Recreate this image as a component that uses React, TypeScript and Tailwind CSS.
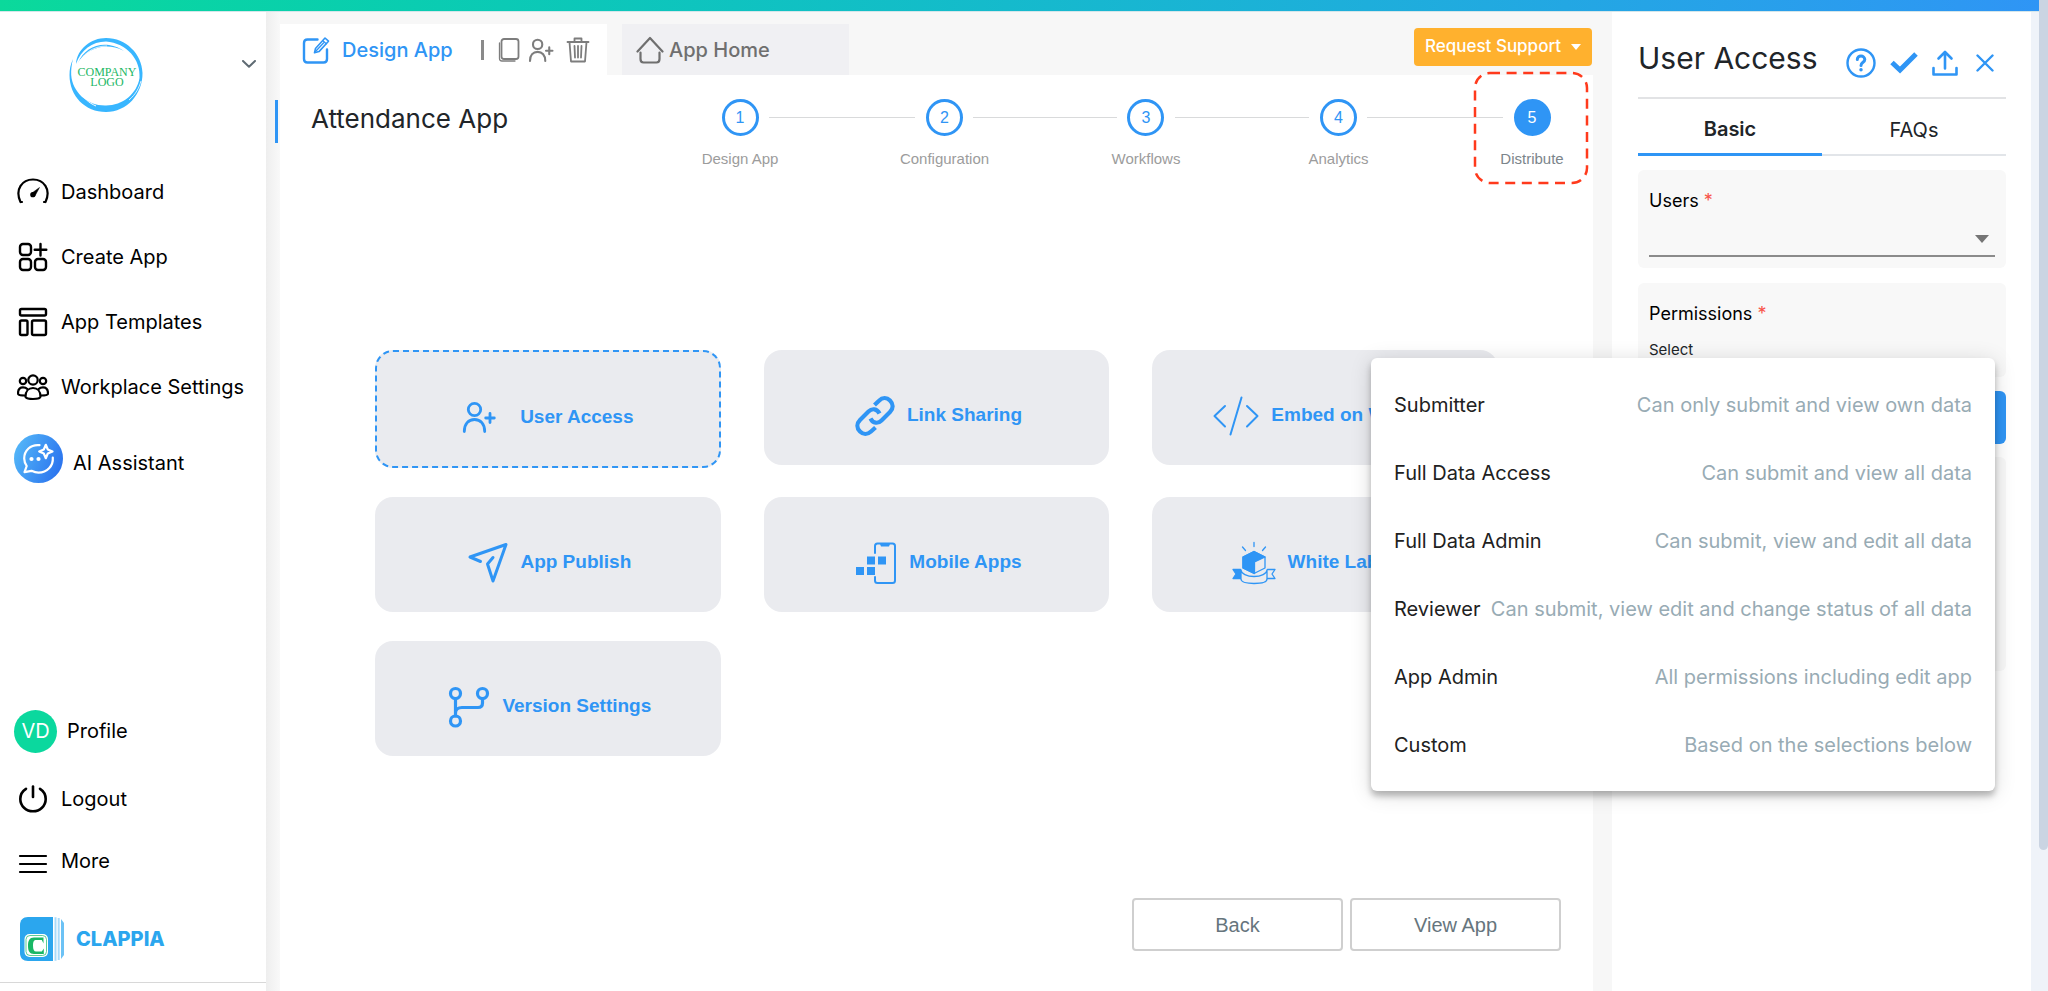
import React from 'react';

interface IconProps {
  className?: string;
}

const stroke = {
  fill: 'none',
  stroke: 'currentColor',
  strokeLinecap: 'round' as const,
  strokeLinejoin: 'round' as const,
};

const CompanyLogo = () => (
  <svg viewBox="0 0 74 74" className="h-[74px] w-[74px]" role="img" aria-label="Company logo">
    <path
      fillRule="evenodd"
      fill="#38b6ff"
      d="M37 0C57 0 73 16 73.500 35C73.700 56 58 74 37 74C16 74 .5 58 .5 37C.5 32 1.500 26 4 21C2.500 27 2 32 2.200 37C3.500 54 18 67.500 36 67.500C53 68 68 56 70.500 40C72 22 58 5 37 3.500C23 3.500 12 12 7 26C8 11 22 0 37 0Z"
    />
    <path d="M9 25C14 12 27 5 40 7C46 8 51 10 55 13C46 8 38 8 32 9C22 11 13 17 9 25Z" fill="#38b6ff" />
    <path d="M8 30C12 16 24 8 38 8" fill="none" stroke="#fff" strokeWidth="0.8" />
    <path d="M10 52C14 60 20 65 27 68" fill="none" stroke="#fff" strokeWidth="1" />
    <path d="M60 62C67 56 70 50 72 43" fill="none" stroke="#fff" strokeWidth="0.8" />
    <text x="38" y="38" textAnchor="middle" fontSize="12" fill="#22b765" fontFamily="'Liberation Serif', serif">COMPANY</text>
    <text x="38" y="48" textAnchor="middle" fontSize="12" fill="#22b765" fontFamily="'Liberation Serif', serif">LOGO</text>
  </svg>
);

const GaugeIcon = () => (
  <svg viewBox="0 0 32 32" className="h-8 w-8" {...stroke} strokeWidth="2.200">
    <path d="M3.500 26C-2.500 13 5.500 3.500 16 3.500S34.500 13 28.500 26M3.500 26H5M28.500 26H27" />
    <path d="M14.300 17.500L22.500 11.500L17.800 20.200Z" fill="currentColor" strokeWidth="0.5" />
    <circle cx="15.800" cy="18.700" r="2.600" fill="currentColor" stroke="none" />
  </svg>
);

const CreateIcon = () => (
  <svg viewBox="0 0 32 32" className="h-8 w-8" {...stroke} strokeWidth="2.400">
    <rect x="3" y="3" width="11" height="11" rx="3" />
    <rect x="3" y="18" width="11" height="11" rx="3" />
    <rect x="18" y="18" width="11" height="11" rx="3" />
    <path d="M23.500 3V14.500M17.700 8.700H29.300" />
  </svg>
);

const TemplateIcon = () => (
  <svg viewBox="0 0 32 32" className="h-8 w-8" {...stroke} strokeWidth="2.400">
    <rect x="3" y="3" width="26" height="6.500" rx="1.500" />
    <rect x="3" y="14.500" width="7.500" height="14.500" rx="1.500" />
    <rect x="15" y="14.500" width="14" height="14.500" rx="1.500" />
  </svg>
);

const PeopleIcon = () => (
  <svg viewBox="0 0 32 32" className="h-8 w-8" {...stroke} strokeWidth="2.200">
    <circle cx="16" cy="9" r="4.700" />
    <circle cx="6" cy="10" r="3.200" />
    <circle cx="26" cy="10" r="3.200" />
    <path d="M8.500 25.500C8.500 20.500 11.500 17 16 17S23.500 20.500 23.500 25.500C23.500 27.300 19.500 28 16 28S8.500 27.300 8.500 25.500Z" />
    <path d="M8 24.500C5 24.500 1 24 1 22.500C1 18.500 3 16.300 6 16.300C7.800 16.300 9.300 16.900 10.300 18M24 24.500C27 24.500 31 24 31 22.500C31 18.500 29 16.300 26 16.300C24.200 16.300 22.700 16.900 21.700 18" />
  </svg>
);

const AssistantIcon = () => (
  <svg viewBox="0 0 49 49" className="h-[49px] w-[49px]">
    <defs>
      <linearGradient id="assistant" x1="0" y1="0.300" x2="1" y2="0.700">
        <stop offset="0" stopColor="#53b6f8" />
        <stop offset="1" stopColor="#2a72ee" />
      </linearGradient>
    </defs>
    <circle cx="24.500" cy="24.500" r="24.500" fill="url(#assistant)" />
    <g {...stroke} stroke="#fff" strokeWidth="2.200">
      <path d="M25.500 11.200C16.500 10.300 10.200 16.500 10.200 24.500C10.200 27.500 11.400 30 12.700 32L10.500 38.200L17.500 36.800C20 38 22 38.600 24.500 38.600C33 38.600 39.500 32 38.800 23.500" />
      <path d="M31.800 10.800L33.800 15.500L38.500 17.500L33.800 19.500L31.800 24.200L29.800 19.500L25.200 17.500L29.800 15.500Z" />
    </g>
    <circle cx="17.500" cy="25" r="2.100" fill="#fff" />
    <circle cx="24.500" cy="25" r="2.100" fill="#fff" />
  </svg>
);

const PowerIcon = () => (
  <svg viewBox="0 0 32 32" className="h-8 w-8" {...stroke} strokeWidth="2.600">
    <path d="M16 3.500V14" />
    <path d="M9 5.800C5 8.300 3.300 12 3.300 16C3.300 23 9 28.300 16 28.300S28.700 23 28.700 16C28.700 12 27 8.300 23 5.800" />
  </svg>
);

const MenuIcon = () => (
  <svg viewBox="0 0 32 32" className="h-8 w-8" {...stroke} strokeWidth="2.200">
    <path d="M3 8H29M3 16H29M3 24H29" />
  </svg>
);

const ClappiaLogo = () => (
  <svg viewBox="0 0 44 44" className="h-11 w-11">
    <path d="M8 0H33V44H8C3 44 0 41 0 36V8C0 3 3 0 8 0Z" fill="#2ba6ee" />
    <path d="M34.500 0.300H36.500V43.700H34.500ZM37.700 1H39.700V43H37.700Z" fill="#a9dbfa" />
    <path d="M41 2L44 6V38L41 42Z" fill="#6cc2f5" />
    <rect x="4.500" y="17" width="23.500" height="23" rx="5" fill="#fff" />
    <rect x="6" y="18.500" width="20.500" height="20" rx="4" fill="none" stroke="#19b765" strokeWidth="0.700" />
    <path
      d="M23.500 26.500L21.800 23H16C14 23 13 24.500 13 28.500S14 34.500 16 34.500H21.800L23.800 31.500V37H14C9.500 37 8 34 8 28.800S9.500 20.500 14 20.500H23.500Z"
      fill="#19b765"
    />
  </svg>
);

const EditIcon = () => (
  <svg viewBox="0 0 28 28" className="h-7 w-7" {...stroke} strokeWidth="2.400">
    <path d="M15.500 3.500H5.500C3.500 3.500 2 5 2 7V23C2 25 3.500 26.500 5.500 26.500H21.500C23.500 26.500 25 25 25 23V13.500" />
    <path d="M12.500 16.800L13.500 12.500L23 2L26.500 5.200L17 15.600Z" strokeWidth="1.600" />
    <path d="M20.700 4.600L24.200 7.800M13.500 15.500L21.500 7" strokeWidth="1.300" />
  </svg>
);

const CopyIcon = () => (
  <svg viewBox="0 0 22 24" className="h-6 w-[22px]" {...stroke} strokeWidth="1.800">
    <rect x="3.500" y="1" width="17" height="20" rx="2.500" />
    <path d="M1.500 5V20.500C1.500 22 2.500 23 4 23H17" strokeWidth="1.300" />
  </svg>
);

const UserPlusIcon = ({ className }: IconProps) => (
  <svg viewBox="0 0 34 32" className={className} {...stroke} strokeWidth="2.800">
    <circle cx="12.500" cy="8.500" r="6.200" />
    <path d="M2.300 30.500C2.300 23 6.500 18.500 12.500 18.500S22.700 23 22.700 30.500" />
    <path d="M28 12.500V21.500M23.700 17H32.300" />
  </svg>
);

const TrashIcon = () => (
  <svg viewBox="0 0 24 26" className="h-[26px] w-6" {...stroke} strokeWidth="1.800">
    <path d="M1.500 5H22.500M8.500 5V1.500H15.500V5M3.500 5L5 24.500H19L20.500 5M8.500 9L9 20.500M12 9V20.500M15.500 9L15 20.500" />
  </svg>
);

const HomeIcon = () => (
  <svg viewBox="0 0 28 28" className="h-7 w-7" {...stroke} strokeWidth="2.200">
    <path d="M1.500 15.500L14 2L26.500 15.500" />
    <path d="M4.500 16.500V23C4.500 25 5.500 26.500 7.500 26.500H20.500C22.500 26.500 23.500 25 23.500 23V16.500" />
  </svg>
);

const LinkIcon = () => (
  <svg viewBox="0 0 40 40" className="h-10 w-10" {...stroke} strokeWidth="4.200" strokeLinecap="butt">
    <path d="M19.500 9L24 4.700C27.500 1.200 32 1.500 35 4.500C38.500 8 38.500 12.500 35 16L26.500 24.500C23 28 18 27.500 15.500 22.500" />
    <path d="M20.500 31.500L16 35.500C12.500 38.800 8 38.500 5 35.500C1.500 32 1.500 27.500 5 24L13.500 15.500C17 12 22 12.500 24.500 17.500" />
  </svg>
);

const CodeIcon = () => (
  <svg viewBox="0 0 46 40" className="h-10 w-[46px]" {...stroke} strokeWidth="2">
    <path d="M12 10L1.500 20L12 30.500M34 10L44.500 20L34 30.500M28.500 1.500L17.500 38.500" />
  </svg>
);

const SendIcon = () => (
  <svg viewBox="0 0 40 42" className="h-[42px] w-10" {...stroke} strokeWidth="3">
    <path d="M12.500 19.500L2 15L38 2.500L25 39L19.500 22L25 15.500" />
  </svg>
);

const MobileIcon = () => (
  <svg viewBox="0 0 42 42" className="h-[42px] w-[42px]">
    <path
      d="M20 11V4C20 2.500 21 1.500 22.500 1.500H37.500C39 1.500 40 2.500 40 4V38.500C40 40 39 41 37.500 41H22.500C21 41 20 40 20 38.500V35"
      {...stroke}
      strokeWidth="2"
    />
    <path d="M25 2H35L34 4.500H26Z" fill="currentColor" />
    <path d="M12 14.500H20V22.500H12ZM23 14.500H31V22.500H23ZM1 25H9V33H1ZM12 25H20V33H12Z" fill="currentColor" />
  </svg>
);

const WhiteLabelIcon = () => (
  <svg viewBox="0 0 44 44" className="h-11 w-11" {...stroke} strokeWidth="1.300">
    <path d="M22 1.500V5.500M10.500 6L13.500 9.500M33.500 6L30.500 9.500" />
    <path d="M22 10.500L33 16V27L22 32.500L11 27V16Z" />
    <path d="M22 10.500L33 16L22.500 21V32.500L11 27V16Z" fill="currentColor" />
    <path d="M8.500 28.500H1L4 33L1 37.500H9Z" fill="currentColor" />
    <path d="M35.500 28.500H43L40 33L43 37.500H35.500" />
    <path d="M9 29C9 32.500 15 35.500 22 35.500S35 32.500 35 29V38C35 41 29 42.500 22 42.500S9 41 9 38Z" fill="#eaebef" />
  </svg>
);

const BranchIcon = () => (
  <svg viewBox="0 0 42 42" className="h-[42px] w-[42px]" {...stroke} strokeWidth="3.200">
    <circle cx="7.500" cy="7.500" r="5" />
    <circle cx="34.500" cy="7.500" r="5" />
    <circle cx="7.500" cy="35" r="5" />
    <path d="M7.500 12.500V30M34.500 12.500V17C34.500 20 33 21.500 30 21.500H14C10 21.500 7.500 23.500 7.500 27" />
  </svg>
);

const HelpIcon = () => (
  <svg viewBox="0 0 30 30" className="h-[30px] w-[30px]" {...stroke} strokeWidth="2.400">
    <circle cx="15" cy="15" r="13.500" />
    <path d="M11.300 11.500C11.300 9.300 13 8 15 8S18.800 9.500 18.800 11.500C18.800 14.300 15 14.300 15 17.500" strokeWidth="3" />
    <circle cx="15" cy="21.800" r="1" strokeWidth="1.500" fill="currentColor" />
  </svg>
);

const CheckIcon = () => (
  <svg viewBox="0 0 28 22" className="h-[22px] w-7" {...stroke} strokeWidth="5" strokeLinecap="butt" strokeLinejoin="miter">
    <path d="M2 10.500L10 18L26 2" />
  </svg>
);

const UploadIcon = () => (
  <svg viewBox="0 0 26 26" className="h-[26px] w-[26px]" {...stroke} strokeWidth="2.600">
    <path d="M13 18.500V2.500M6.500 8.500L13 2L19.500 8.500" />
    <path d="M1.500 18V24.500H24.500V18" />
  </svg>
);

const CloseIcon = () => (
  <svg viewBox="0 0 18 18" className="h-[18px] w-[18px]" {...stroke} strokeWidth="2.400">
    <path d="M1.500 1.500L16.500 16.500M16.500 1.500L1.500 16.500" />
  </svg>
);

const navItems = [
  { label: 'Dashboard', icon: <GaugeIcon /> },
  { label: 'Create App', icon: <CreateIcon /> },
  { label: 'App Templates', icon: <TemplateIcon /> },
  { label: 'Workplace Settings', icon: <PeopleIcon /> },
];

const steps = [
  { label: 'Design App', line: 'flex-[147_1_0%]' },
  { label: 'Configuration', line: 'flex-[144_1_0%]' },
  { label: 'Workflows', line: 'flex-[135_1_0%]' },
  { label: 'Analytics', line: 'flex-[136_1_0%]' },
  { label: 'Distribute', line: '' },
];

const tiles = [
  { label: 'Link Sharing', icon: <LinkIcon /> },
  { label: 'Embed on Website', icon: <CodeIcon /> },
  { label: 'App Publish', icon: <SendIcon /> },
  { label: 'Mobile Apps', icon: <MobileIcon /> },
  { label: 'White Labeling', icon: <WhiteLabelIcon /> },
  { label: 'Version Settings', icon: <BranchIcon /> },
];

const permissions = [
  { name: 'Submitter', hint: 'Can only submit and view own data' },
  { name: 'Full Data Access', hint: 'Can submit and view all data' },
  { name: 'Full Data Admin', hint: 'Can submit, view and edit all data' },
  { name: 'Reviewer', hint: 'Can submit, view edit and change status of all data' },
  { name: 'App Admin', hint: 'All permissions including edit app' },
  { name: 'Custom', hint: 'Based on the selections below' },
];

const Sidebar = () => (
  <aside className="flex w-[266px] shrink-0 flex-col bg-white text-xl text-black">
    <div className="flex items-start justify-between pt-[26px] pr-2.5 pl-[69px]">
      <CompanyLogo />
      <button aria-label="Switch workplace" className="mt-[22px] text-[#5f6b73]">
        <svg viewBox="0 0 14 8" className="h-2 w-3.5" {...stroke} strokeWidth="2">
          <path d="M1 1L7 6.800L13 1" />
        </svg>
      </button>
    </div>

    <nav className="mt-[47px] flex flex-col">
      {navItems.map((item) => (
        <a key={item.label} href="#" className="flex h-[65px] items-center gap-3 pl-[17px]">
          {item.icon}
          {item.label}
        </a>
      ))}
      <a href="#" className="flex h-[78px] items-center gap-2.5 pl-3.5">
        <AssistantIcon />
        <span className="pt-2.5">AI Assistant</span>
      </a>
    </nav>

    <div className="mt-auto flex flex-col">
      <a href="#" className="flex h-[68px] items-center gap-2.5 pl-3.5">
        <span className="flex h-[43px] w-[43px] items-center justify-center rounded-full bg-[#0bd89e] text-white">VD</span>
        Profile
      </a>
      <a href="#" className="flex h-[68px] items-center gap-3 pl-[17px]">
        <PowerIcon />
        Logout
      </a>
      <a href="#" className="flex h-[62px] items-center gap-3 pl-[17px]">
        <MenuIcon />
        <span className="pb-1.5">More</span>
      </a>
      <a href="#" className="flex h-[88px] items-center gap-3 border-b border-[#d8d8d8] pl-5 font-extrabold text-[#2ba6ee]">
        <ClappiaLogo />
        CLAPPIA
      </a>
      <div className="h-2" />
    </div>
  </aside>
);

const Steps = () => (
  <ol className="mr-8 flex flex-1 items-start pt-6 font-['Liberation_Sans',sans-serif]">
    {steps.map((step, i) => {
      const active = i === steps.length - 1;
      return (
        <React.Fragment key={step.label}>
          <li className="relative flex w-[58px] shrink-0 flex-col items-center gap-3">
            {active && (
              <svg viewBox="0 0 116 114" className="absolute -top-7 -left-[30px] h-[114px] w-[116px]">
                <rect x="2" y="2" width="112" height="110" rx="15" fill="none" stroke="#ff3a1c" strokeWidth="2.500" strokeDasharray="10 6.600" />
              </svg>
            )}
            <button
              className={`h-[37px] w-[37px] rounded-full border-3 border-[#2f95f5] text-base ${
                active ? 'bg-[#2f95f5] text-white' : 'text-[#2f95f5]'
              }`}
            >
              {i + 1}
            </button>
            <span className={`text-[15px] leading-[22px] whitespace-nowrap ${active ? 'text-[#7b858b]' : 'text-[#9c9c9c]'}`}>
              {step.label}
            </span>
          </li>
          {!active && <li aria-hidden="true" className={`mt-[18px] h-px bg-[#d9dadb] ${step.line}`} />}
        </React.Fragment>
      );
    })}
  </ol>
);

const DesignArea = () => (
  <main className="flex min-w-0 flex-1 flex-col bg-white">
    <header className="flex items-start bg-[#f7f7f7] pt-3">
      <div className="flex h-[51px] w-[327px] items-center bg-white pl-[22px] text-[#7d7d7d]">
        <a href="#" className="flex items-center gap-3 text-xl font-medium text-[#2f95f5]">
          <EditIcon />
          Design App
        </a>
        <span className="ml-7 h-5 w-[3px] bg-[#8a8a8a]" />
        <button aria-label="Duplicate app" className="ml-3.5"><CopyIcon /></button>
        <button aria-label="Add user" className="ml-2"><UserPlusIcon className="h-6 w-[26px]" /></button>
        <button aria-label="Delete app" className="ml-3"><TrashIcon /></button>
      </div>
      <a href="#" className="ml-[15px] flex h-[51px] w-[227px] items-center gap-[5px] bg-[#f0f0f3] pl-3.5 text-xl font-medium text-[#6f6f6f]">
        <HomeIcon />
        App Home
      </a>
      <button className="mt-1 mr-px ml-auto flex h-[38px] w-[178px] items-center justify-center gap-2.5 rounded bg-[#ffb12e] text-[17px] font-medium text-white">
        Request Support
        <svg viewBox="0 0 10 6" className="h-1.5 w-2.5"><path d="M0 0H10L5 6Z" fill="currentColor" /></svg>
      </button>
    </header>

    <div className="flex items-start">
      <h1 className="w-[431px] shrink-0 pt-6 pl-[31px] text-[26px] leading-10 text-[#212529]">Attendance App</h1>
      <Steps />
    </div>

    <div className="mt-[180px] grid grid-cols-3 items-start gap-x-[43px] gap-y-[29px] px-[95px] font-['Liberation_Sans',sans-serif] text-[19px] font-bold text-[#2f95f5]">
      <button className="flex h-[118px] items-center justify-center gap-6 rounded-[18px] border-2 border-dashed border-[#2f95f5] bg-[#eaebef] pt-4">
        <UserPlusIcon className="h-8 w-[34px]" />
        User Access
      </button>
      {tiles.map((tile) => (
        <button key={tile.label} className="flex h-[115px] items-center justify-center gap-3 rounded-[18px] bg-[#eaebef] pt-4 pl-1">
          {tile.icon}
          {tile.label}
        </button>
      ))}
    </div>

    <div className="mt-auto mr-8 mb-10 flex justify-end gap-[7px] pt-10 font-['Liberation_Sans',sans-serif] text-xl text-[#66757d]">
      <button className="h-[53px] w-[211px] rounded border-2 border-[#cfcfcf]">Back</button>
      <button className="h-[53px] w-[211px] rounded border-2 border-[#cfcfcf]">View App</button>
    </div>
  </main>
);

const PermissionMenu = () => (
  <ul
    role="listbox"
    aria-label="Permissions"
    className="absolute top-[75px] right-[11px] z-10 w-[624px] rounded-md bg-white pt-[13px] pb-3 text-xl shadow-[0_5px_6px_rgba(0,0,0,0.25),0_3px_22px_rgba(0,0,0,0.14)]"
  >
    {permissions.map((item) => (
      <li key={item.name} role="option" aria-selected="false" className="flex h-[68px] items-center justify-between px-[23px]">
        <span className="text-[#212121]">{item.name}</span>
        <span className="text-[#98abb4]">{item.hint}</span>
      </li>
    ))}
  </ul>
);

const AccessPanel = () => (
  <section className="w-[419px] shrink-0 bg-white pr-[25px] pl-[26px] text-[#212529]">
    <div className="flex h-[87px] items-center justify-between border-b-2 border-[#e2e3e5] pt-1.5">
      <h2 className="text-3xl">User Access</h2>
      <div className="flex items-center gap-3.5 pt-2.5 pr-3 text-[#2f95f5]">
        <button aria-label="Help"><HelpIcon /></button>
        <button aria-label="Save"><CheckIcon /></button>
        <button aria-label="Upload"><UploadIcon /></button>
        <button aria-label="Close" className="pl-1"><CloseIcon /></button>
      </div>
    </div>

    <div className="grid grid-cols-2 text-xl">
      <button className="h-[57px] border-b-3 border-[#2f95f5] pt-1.5 font-semibold">Basic</button>
      <button className="h-[57px] border-b-2 border-[#e2e5e9] pt-1.5">FAQs</button>
    </div>

    <div className="mt-3.5 h-[98px] rounded-md bg-[#f8f8f8] px-[11px] pt-[19px] text-lg leading-6 text-black">
      <label htmlFor="users">Users <span className="text-[#f8544a]">*</span></label>
      <div className="relative">
        <select id="users" className="h-11 w-full appearance-none border-b-2 border-[#8b8b8b] bg-transparent" />
        <svg viewBox="0 0 14 8" className="pointer-events-none absolute top-[22px] right-1.5 h-2 w-3.5 text-[#757575]">
          <path d="M0 0H14L7 8Z" fill="currentColor" />
        </svg>
      </div>
    </div>

    <div className="relative mt-[15px] h-[94px] rounded-md bg-[#f8f8f8] px-[11px] pt-[19px] text-lg leading-6 text-black">
      <p>Permissions <span className="text-[#f8544a]">*</span></p>
      <button aria-haspopup="listbox" className="mt-3 block w-full text-left text-[15px] text-[#212529]">Select</button>
      <PermissionMenu />
    </div>

    <button aria-label="Add user" className="mt-3.5 block h-[53px] w-full rounded-md bg-[#2f95f5]" />
    <div className="mt-[13px] h-[214px] rounded-md bg-[#f8f8f8]" />
  </section>
);

const App = () => {
  return (
    <div className="flex min-h-screen bg-[#eff3f9] font-[Inter,sans-serif]">
      <div className="flex min-w-0 flex-1 flex-col">
        <div className="h-3 border-b border-[#d5e6ea] bg-linear-to-r from-[#0bd99b] to-[#2f95f5]" />
        <div className="flex flex-1">
          <Sidebar />
          <div className="w-3.5 shrink-0 bg-linear-to-r from-[#eeeeee] to-[#f9f9f9] pt-[88px] pl-[9px]">
            <div className="h-[43px] w-[3px] bg-[#2f95f5]" />
          </div>
          <DesignArea />
          <div className="w-[19px] shrink-0 bg-[#f7f7f7]" />
          <AccessPanel />
          <div className="w-2 shrink-0" />
        </div>
      </div>
      <div className="w-[9px] shrink-0">
        <div className="h-[850px] rounded-b-full bg-[#cad4e2]" />
      </div>
    </div>
  );
};

export default App;
